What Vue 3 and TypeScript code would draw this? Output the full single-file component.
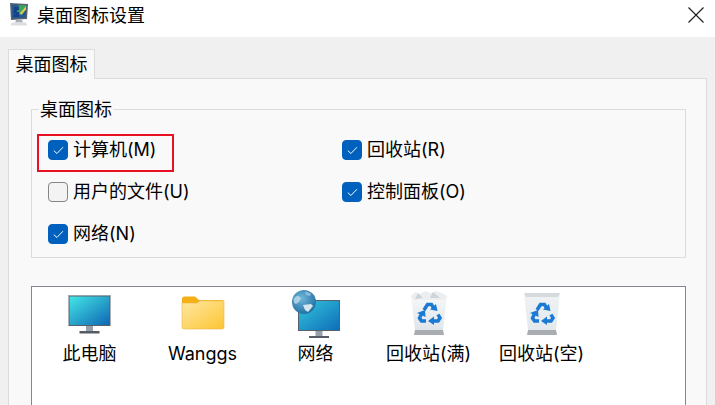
<script setup lang="ts">
interface CheckItem {
  label: string
  checked: boolean
  marked?: boolean
}

const checks: CheckItem[] = [
  { label: '计算机(M)', checked: true, marked: true },
  { label: '回收站(R)', checked: true },
  { label: '用户的文件(U)', checked: false },
  { label: '控制面板(O)', checked: true },
  { label: '网络(N)', checked: true }
]
</script>

<template>
  <div class="window">
    <header class="titlebar">
      <svg class="app-icon" width="22" height="24" viewBox="0 0 22 24">
        <path d="M2 1 L20 2 L19 17 L3 18 Z" fill="#5a6470" />
        <path d="M3.5 2.500 L18.500 3.200 L17.700 15.500 L4.300 16.500 Z" fill="#25598f" />
        <path d="M11 3 L18.200 3.300 L18 7 L12 13 L9 10 Z" fill="#3aa655" />
        <path d="M6 5 H11 V8 H8.500 V10 H11 V15 H5.500 V12.500 H8 V11.500 H5.800 Z" fill="#17408a" />
        <path d="M12 11 L18.200 4 L18 7.500 L13.500 13 Z" fill="#d9c95c" />
        <path d="M8 18 H14 L15 20.500 H7 Z" fill="#a9afb6" />
        <path d="M4 20.500 H18 L19.500 23.500 H2.500 Z" fill="#dcdfe2" />
      </svg>
      <span class="title">桌面图标设置</span>
      <svg class="close" width="16" height="16" viewBox="0 0 16 16">
        <path d="M.5 .5 L15.500 15.500 M15.500 .5 L.5 15.500" stroke="#1a1a1a" stroke-width="1.100" fill="none" />
      </svg>
    </header>

    <main class="body">
      <div class="tab">桌面图标</div>
      <section class="panel">
        <div class="group">
          <div class="legend">桌面图标</div>
          <div class="checks">
            <label v-for="item in checks" :key="item.label" class="check-row" :class="{ marked: item.marked }">
              <span class="box" :class="{ on: item.checked }">
                <svg v-if="item.checked" width="11" height="9" viewBox="0 0 11 9">
                  <path d="M.8 4.600 L3.900 7.500 L10 1.200" stroke="#fff" stroke-width="1" fill="none" />
                </svg>
              </span>
              <span>{{ item.label }}</span>
            </label>
          </div>
        </div>

        <div class="icon-list">
          <div class="icon-cell">
            <svg width="48" height="48" viewBox="0 0 48 48">
              <defs>
                <linearGradient id="screenA" x1="0" y1="0" x2="1" y2="1">
                  <stop offset="0" stop-color="#43e6e6" />
                  <stop offset="1" stop-color="#0e67b4" />
                </linearGradient>
              </defs>
              <rect x="2.500" y="5" width="42" height="31" fill="#58606b" />
              <rect x="2.500" y="5" width="42" height="1" fill="#9aa2aa" />
              <rect x="3.500" y="6.500" width="40" height="28.500" fill="url(#screenA)" />
              <rect x="20" y="36" width="7" height="5" fill="#97a1aa" />
              <rect x="13.500" y="41" width="20" height="2.500" fill="#565c63" />
            </svg>
            <span>此电脑</span>
          </div>

          <div class="icon-cell">
            <svg width="48" height="48" viewBox="0 0 48 48">
              <defs>
                <linearGradient id="folderA" x1="0" y1="0" x2="1" y2="1">
                  <stop offset="0" stop-color="#ffe8a3" />
                  <stop offset="1" stop-color="#fcc533" />
                </linearGradient>
              </defs>
              <path d="M3 9 Q3 6.500 5 6.500 H16 L20 10 H44 V14 H3 Z" fill="#f5b016" />
              <path d="M3 13 H18 L21 10.800 H45 V37 Q45 39 43 39 H5 Q3 39 3 37 Z" fill="url(#folderA)" stroke="#eab544" stroke-width=".6" />
            </svg>
            <span>Wanggs</span>
          </div>

          <div class="icon-cell">
            <svg width="48" height="48" viewBox="0 0 48 48">
              <defs>
                <linearGradient id="screenB" x1="0" y1="0" x2="1" y2="1">
                  <stop offset="0" stop-color="#33c4de" />
                  <stop offset="1" stop-color="#0e6fb8" />
                </linearGradient>
                <radialGradient id="globe" cx=".4" cy=".35" r=".7">
                  <stop offset="0" stop-color="#6fb6da" />
                  <stop offset="1" stop-color="#1f6c9f" />
                </radialGradient>
              </defs>
              <rect x="6" y="10" width="42" height="31" fill="#58606b" />
              <rect x="7" y="11" width="40" height="29" fill="url(#screenB)" />
              <rect x="23.500" y="41" width="7" height="5" fill="#97a1aa" />
              <rect x="17" y="46" width="20" height="2" fill="#565c63" />
              <circle cx="12" cy="12" r="12" fill="url(#globe)" />
              <path d="M1.500 9 Q3 6 6 5.500 L9 8 L7 12 L4 14 L2 13 Z" fill="#cfe3ee" opacity=".7" />
              <path d="M11 15 L19 14 L21 16 L16 22 L13 20 Z" fill="#e4eff5" opacity=".9" />
              <path d="M13 1.500 L19 3.500 L18 6 L14 5 Z" fill="#bcd8e8" opacity=".6" />
            </svg>
            <span>网络</span>
          </div>

          <div class="icon-cell">
            <svg width="48" height="48" viewBox="0 0 48 48">
              <defs>
                <linearGradient id="binA" x1="0" y1="0" x2="0" y2="1">
                  <stop offset="0" stop-color="#f6f8f9" />
                  <stop offset="1" stop-color="#dfe5ea" />
                </linearGradient>
              </defs>
              <path d="M6 6 H42 L38 40 H10 Z" fill="url(#binA)" />
              <path d="M6 6 L10 2 L15 4 L20 1 L26 3 L31 1 L37 3 L42 6 L40 10 H8 Z" fill="#eceef0" />
              <path d="M13 3 L18 8 L10 9 Z M28 2 L35 8 L25 8 Z" fill="#ced3d7" />
              <path d="M10 40 H38 L39 45 H9 Z" fill="#a9adb1" />
              <g fill="none" stroke="#1a7ad4" stroke-width="3.500">
                <path d="M19 20 L22.500 14.500 H26.500 L28.500 18" />
                <path d="M33 24.500 L35 28 L33 31 H28" />
                <path d="M21 31 H16.500 L14.500 28 L16.500 24" />
              </g>
              <g fill="#1a7ad4">
                <path d="M25 19.500 L32.500 21 L31 14 Z" />
                <path d="M29 26.500 L29 35 L23 31 Z" />
                <path d="M12 23 L20 20 L20.500 27 Z" />
              </g>
            </svg>
            <span>回收站(满)</span>
          </div>

          <div class="icon-cell">
            <svg width="48" height="48" viewBox="0 0 48 48">
              <defs>
                <linearGradient id="binB" x1="0" y1="0" x2="0" y2="1">
                  <stop offset="0" stop-color="#f0f3f5" />
                  <stop offset="1" stop-color="#e2e8ec" />
                </linearGradient>
              </defs>
              <path d="M6 3 H42 L38 40 H10 Z" fill="url(#binB)" />
              <path d="M6 3 H42 L40 7 H8 Z" fill="#d5dadd" />
              <path d="M10 40 H38 L39 45 H9 Z" fill="#a9adb1" />
              <g fill="none" stroke="#1a7ad4" stroke-width="3.500">
                <path d="M19 20 L22.500 14.500 H26.500 L28.500 18" />
                <path d="M33 24.500 L35 28 L33 31 H28" />
                <path d="M21 31 H16.500 L14.500 28 L16.500 24" />
              </g>
              <g fill="#1a7ad4">
                <path d="M25 19.500 L32.500 21 L31 14 Z" />
                <path d="M29 26.500 L29 35 L23 31 Z" />
                <path d="M12 23 L20 20 L20.500 27 Z" />
              </g>
            </svg>
            <span>回收站(空)</span>
          </div>
        </div>
      </section>
    </main>
  </div>
</template>

<style>
html,
body {
  margin: 0;
  background: #f0f0f0;
}
</style>

<style scoped>
.window {
  width: 715px;
  height: 405px;
  overflow: hidden;
  display: flex;
  flex-direction: column;
  font-family: Inter, "Noto Sans CJK SC", sans-serif;
  font-size: 18px;
  color: #000;
}

.titlebar {
  height: 37px;
  flex: none;
  display: flex;
  align-items: center;
  background: #fff;
  padding: 0 11px 0 8px;
}

.app-icon {
  margin-right: 7px;
  margin-top: -9px;
}

.title {
  line-height: 30px;
  margin-top: -6px;
}

.close {
  margin-left: auto;
  margin-top: -7px;
}

.body {
  flex: 1;
  min-height: 0;
  display: flex;
  flex-direction: column;
  align-items: flex-start;
  background: #f0f0f0;
  padding: 12px 8px 0;
}

.tab {
  position: relative;
  z-index: 1;
  height: 31px;
  width: 87px;
  box-sizing: border-box;
  margin-bottom: -1px;
  background: #f9f9f9;
  border: 1px solid #dcdcdc;
  border-bottom: 0;
  text-align: center;
  line-height: 29px;
}

.panel {
  flex: 1;
  align-self: stretch;
  box-sizing: border-box;
  background: #f9f9f9;
  border: 1px solid #dcdcdc;
  padding: 30px 20px 0 22px;
}

.group {
  height: 149px;
  box-sizing: border-box;
  border: 1px solid #dcdcdc;
  padding-left: 16px;
}

.legend {
  width: fit-content;
  margin: -11px 0 0 -9px;
  padding: 0 1px;
  height: 22px;
  line-height: 22px;
  background: #f9f9f9;
}

.checks {
  display: grid;
  grid-template-columns: 294px 1fr;
  grid-auto-rows: 42px;
  margin-top: 19px;
}

.check-row {
  position: relative;
  display: flex;
  align-items: center;
  gap: 5px;
  height: 20px;
  line-height: 20px;
}

.check-row.marked::after {
  content: "";
  position: absolute;
  left: -11px;
  top: -6px;
  width: 137px;
  height: 38px;
  box-sizing: border-box;
  border: 2px solid #e81123;
}

.box {
  flex: none;
  width: 20px;
  height: 20px;
  box-sizing: border-box;
  border: 1px solid #858585;
  border-radius: 4px;
  background: #f3f3f3;
  display: flex;
  align-items: center;
  justify-content: center;
}

.box.on {
  background: #0060bd;
  border-color: #0060bd;
}

.icon-list {
  margin-top: 28px;
  height: 130px;
  box-sizing: border-box;
  border: 1px solid #85858f;
  background: #fff;
  padding: 3px 0 0 1px;
  display: grid;
  grid-template-columns: repeat(5, 113px);
  align-items: start;
}

.icon-cell {
  display: flex;
  flex-direction: column;
  align-items: center;
  gap: 4px;
  line-height: 24px;
}
</style>
